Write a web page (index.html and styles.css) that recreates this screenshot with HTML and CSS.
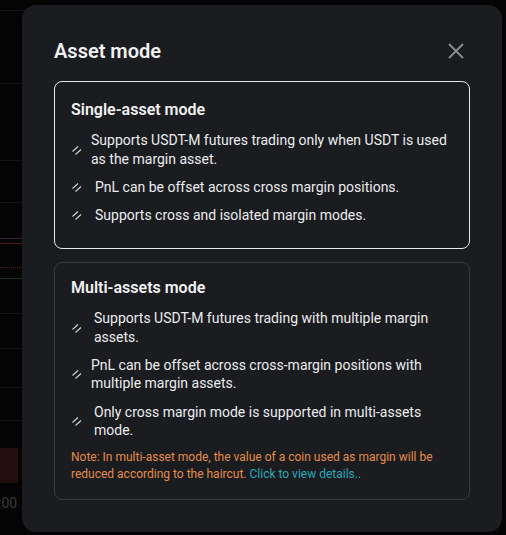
FILE: index.html
```html
<!DOCTYPE html>
<html lang="en">
<head>
<meta charset="utf-8">
<title>Asset mode</title>
<link rel="stylesheet" href="styles.css">
</head>
<body>
<div class="chart">
  <div class="grid-line g1"></div>
  <div class="grid-line g2"></div>
  <div class="grid-line g3"></div>
  <div class="grid-line g4"></div>
  <div class="line-purple"></div>
  <div class="line-red"></div>
  <div class="line-dotted"></div>
  <div class="line-green"></div>
  <div class="grid-line g5"></div>
  <div class="grid-line g6"></div>
  <div class="grid-line g7"></div>
  <div class="grid-line g8"></div>
  <div class="candle"></div>
  <div class="time-label">:00</div>
</div>

<div class="modal">
  <div class="modal-head">
    <h2 class="modal-title">Asset mode</h2>
    <button class="close" aria-label="Close">
      <svg width="16" height="16" viewBox="0 0 16 16"><path d="M1 1 L15 15 M15 1 L1 15" stroke="#8b8c8f" stroke-width="1.8" fill="none"/></svg>
    </button>
  </div>

  <div class="card card-active">
    <h3 class="card-title">Single-asset mode</h3>
    <ul class="list">
      <li class="item item-tight"><span class="ico"><svg width="10" height="10" viewBox="0 0 10 10"><path d="M0.5 6.5 L6 1.5 M3.5 9.5 L9 4.5" stroke="#d4d5d8" stroke-width="1.1" fill="none"/></svg></span><span class="txt">Supports USDT-M futures trading only when USDT is used as the margin asset.</span></li>
      <li class="item"><span class="ico"><svg width="10" height="10" viewBox="0 0 10 10"><path d="M0.5 6.5 L6 1.5 M3.5 9.5 L9 4.5" stroke="#d4d5d8" stroke-width="1.1" fill="none"/></svg></span><span class="txt">PnL can be offset across cross margin positions.</span></li>
      <li class="item"><span class="ico"><svg width="10" height="10" viewBox="0 0 10 10"><path d="M0.5 6.5 L6 1.5 M3.5 9.5 L9 4.5" stroke="#d4d5d8" stroke-width="1.1" fill="none"/></svg></span><span class="txt">Supports cross and isolated margin modes.</span></li>
    </ul>
  </div>

  <div class="card">
    <h3 class="card-title">Multi-assets mode</h3>
    <ul class="list">
      <li class="item item-mid"><span class="ico"><svg width="10" height="10" viewBox="0 0 10 10"><path d="M0.5 6.5 L6 1.5 M3.5 9.5 L9 4.5" stroke="#d4d5d8" stroke-width="1.1" fill="none"/></svg></span><span class="txt">Supports USDT-M futures trading with multiple margin assets.</span></li>
      <li class="item item-tight"><span class="ico"><svg width="10" height="10" viewBox="0 0 10 10"><path d="M0.5 6.5 L6 1.5 M3.5 9.5 L9 4.5" stroke="#d4d5d8" stroke-width="1.1" fill="none"/></svg></span><span class="txt">PnL can be offset across cross-margin positions with multiple margin assets.</span></li>
      <li class="item item-mid"><span class="ico"><svg width="10" height="10" viewBox="0 0 10 10"><path d="M0.5 6.5 L6 1.5 M3.5 9.5 L9 4.5" stroke="#d4d5d8" stroke-width="1.1" fill="none"/></svg></span><span class="txt">Only cross margin mode is supported in multi-assets mode.</span></li>
    </ul>
    <p class="note">Note: In multi-asset mode, the value of a coin used as margin will be reduced according to the haircut. <a class="link" href="#">Click to view details..</a></p>
  </div>
</div>
</body>
</html>
```

FILE: styles.css
```css
* { box-sizing: border-box; }

html, body {
  margin: 0;
  padding: 0;
  height: 100%;
}

body {
  background: #040404;
  font-family: Roboto, "Liberation Sans", Arial, sans-serif;
  color: #eaecef;
  position: relative;
  overflow: hidden;
  padding: 5px 4px 0 22px;
}

/* background chart (decorative, behind the modal) */
.chart {
  position: absolute;
  left: 0;
  top: 0;
  width: 40px;
  height: 535px;
  z-index: 0;
}
.grid-line {
  position: absolute;
  left: 0;
  width: 40px;
  height: 1px;
  background: #121314;
}
.g1 { top: 10px; }
.g2 { top: 83px; }
.g3 { top: 160px; }
.g4 { top: 202px; }
.g5 { top: 313px; }
.g6 { top: 348px; }
.g7 { top: 387px; }
.g8 { top: 420px; }
.line-purple { position: absolute; left: 0; top: 238px; width: 40px; height: 1px; background: #3a1d3a; }
.line-red { position: absolute; left: 0; top: 243px; width: 40px; height: 1px; background: #4a1a1a; }
.line-dotted { position: absolute; left: 0; top: 267px; width: 40px; border-top: 1px dotted #5a1a1a; }
.line-green { position: absolute; left: 0; top: 278px; width: 40px; height: 1px; background: #17301f; }
.candle {
  position: absolute;
  left: 0;
  top: 448px;
  width: 18px;
  height: 35px;
  background: #230d0d;
}
.time-label {
  position: absolute;
  left: -2px;
  top: 495px;
  font-size: 14px;
  color: #3a3a3c;
}

/* modal */
.modal {
  position: relative;
  z-index: 1;
  width: 480px;
  height: 527px;
  background: #1b1c1f;
  border-radius: 14px;
  padding: 26px 32px 0 32px;
}

.modal-head {
  display: flex;
  align-items: center;
  justify-content: space-between;
  height: 40px;
  margin-bottom: 10px;
}

.modal-title {
  margin: 0;
  font-size: 20px;
  font-weight: 600;
  color: #f0f1f3;
  line-height: 28px;
}

.close {
  background: none;
  border: 0;
  padding: 0;
  margin-right: 6px;
  width: 16px;
  height: 16px;
  display: flex;
  cursor: pointer;
}

.card {
  border: 1px solid #393a3e;
  border-radius: 8px;
  padding: 13px 16px 16px 16px;
  margin-bottom: 13px;
}

.card-active {
  border-color: #e6e7ea;
  padding-top: 16px;
  padding-bottom: 23px;
}

.card-title {
  margin: 0 0 9px 0;
  font-size: 16px;
  font-weight: 600;
  line-height: 24px;
  color: #f0f1f3;
}

.list {
  list-style: none;
  margin: 0;
  padding: 0;
  display: flex;
  flex-direction: column;
  gap: 9.5px;
}

.item {
  display: flex;
  align-items: center;
  font-size: 14px;
  line-height: 18.7px;
}

.ico {
  flex: none;
  width: 24px;
  display: flex;
  padding-left: 1px;
}

.item-tight .ico { width: 20px; }
.item-mid .ico { width: 23px; }

.txt { flex: 1; }

.note {
  margin: 9px 0 0 0;
  font-size: 12px;
  line-height: 17px;
  color: #e38c4e;
}

.link {
  color: #2aa9ba;
  text-decoration: none;
}
```
